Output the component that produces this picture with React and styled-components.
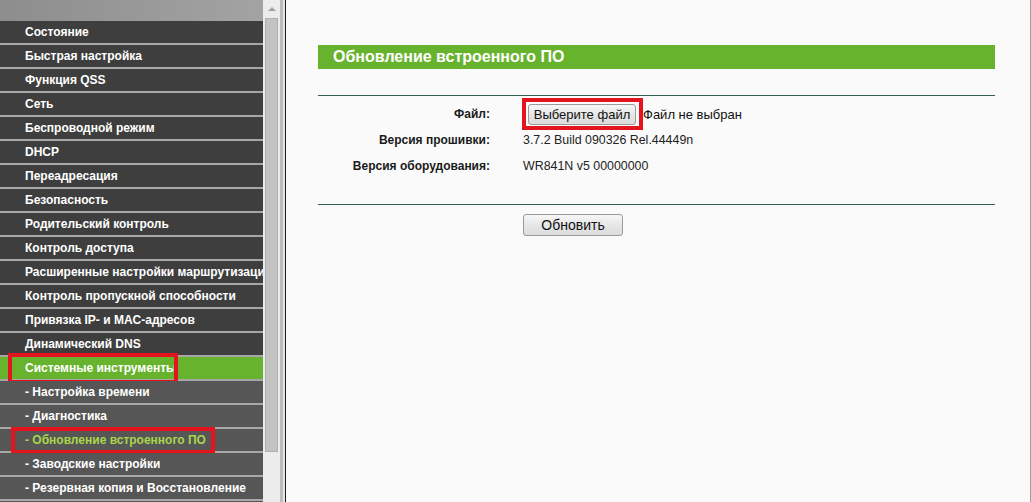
import React from 'react';
import styled, { createGlobalStyle } from 'styled-components';

const GlobalStyle = createGlobalStyle`
  html, body {
    margin: 0;
    padding: 0;
    overflow: hidden;
    background: #fafafa;
    font-family: "Liberation Sans", Arial, sans-serif;
  }
`;

const Page = styled.div`
  display: flex;
  height: 502px;
  width: 1031px;
  overflow: hidden;
`;

const Sidebar = styled.nav`
  width: 263px;
  flex-shrink: 0;
  display: flex;
  flex-direction: column;
  overflow: hidden;
`;

const SidebarHeader = styled.div`
  height: 21px;
  flex-shrink: 0;
  background: linear-gradient(to right, #8d8d8d, #a3a3a3);
`;

const menuBg = {
  main: '#3e3e3e',
  sub: '#565656',
  active: '#67b32e',
};

const MenuItem = styled.div`
  position: relative;
  height: 22px;
  flex-shrink: 0;
  line-height: 22px;
  padding-left: 25px;
  border-bottom: 2px solid #a8a8a8;
  background: ${props => menuBg[props.$kind || 'main']};
  color: ${props => (props.$current ? '#a9d54b' : '#ffffff')};
  font-size: 12px;
  font-weight: bold;
  white-space: nowrap;
`;

const RedFrame = styled.span`
  position: absolute;
  left: ${props => props.$left}px;
  top: ${props => props.$top}px;
  width: ${props => props.$width}px;
  height: ${props => props.$height}px;
  box-sizing: border-box;
  border: 4px solid #e3141e;
  pointer-events: none;
`;

const ScrollTrack = styled.div`
  width: 17px;
  flex-shrink: 0;
  background: #ececec;
  display: flex;
  flex-direction: column;
  align-items: center;
`;

const ScrollArrow = styled.div`
  height: 18px;
  display: flex;
  align-items: center;
  justify-content: center;
  &::before {
    content: '';
    border-left: 4px solid transparent;
    border-right: 4px solid transparent;
    border-bottom: 4px solid #a0a0a0;
  }
`;

const ScrollThumb = styled.div`
  width: 13px;
  height: 434px;
  box-sizing: border-box;
  background: #c3c3c3;
  border: 1px solid #b0b0b0;
`;

const Divider = styled.div`
  width: 6px;
  flex-shrink: 0;
  background: linear-gradient(to right, #bdbdbd 0 3px, #e6e6e6 3px 5px, #1a1a1a 5px 6px);
`;

const Content = styled.main`
  flex: 1;
  background: #fafafa;
  border-right: 1px solid #9d9d9d;
  padding: 45px 0 0 32px;
`;

const Panel = styled.section`
  width: 677px;
`;

const TitleBar = styled.h1`
  margin: 0;
  height: 24px;
  line-height: 24px;
  padding-left: 15px;
  background: #67b32e;
  color: #ffffff;
  font-size: 16px;
  font-weight: bold;
`;

const Rule = styled.hr`
  margin: ${props => props.$top}px 0 0;
  border: none;
  height: 1px;
  background: #2f6148;
`;

const FormGrid = styled.div`
  display: grid;
  grid-template-columns: 172px 1fr;
  column-gap: 33px;
  grid-auto-rows: 26px;
  margin-top: 5px;
  align-items: center;
`;

const Label = styled.div`
  text-align: right;
  font-size: 12px;
  font-weight: bold;
  color: #1a1a1a;
`;

const Value = styled.div`
  font-size: 12.4px;
  color: #222;
  display: flex;
  align-items: center;
`;

const FilePicker = styled.span`
  position: relative;
  display: inline-flex;
  margin-left: 5px;
`;

const Button = styled.button`
  font-family: "Liberation Sans", Arial, sans-serif;
  font-size: ${props => props.$size || 13}px;
  color: #111;
  width: ${props => props.$width}px;
  height: ${props => props.$height}px;
  padding: 0;
  border: 1px solid #9a9a9a;
  border-radius: 3px;
  background: linear-gradient(#f7f7f7, #e6e6e6 50%, #dcdcdc);
  cursor: pointer;
`;

const FileStatus = styled.span`
  font-size: 13px;
  color: #111;
  margin-left: 7px;
`;

const Actions = styled.div`
  padding: 9px 0 0 205px;
`;

const mainItems = [
  'Состояние',
  'Быстрая настройка',
  'Функция QSS',
  'Сеть',
  'Беспроводной режим',
  'DHCP',
  'Переадресация',
  'Безопасность',
  'Родительский контроль',
  'Контроль доступа',
  'Расширенные настройки маршрутизации',
  'Контроль пропускной способности',
  'Привязка IP- и MAC-адресов',
  'Динамический DNS',
];

const subItems = [
  '- Настройка времени',
  '- Диагностика',
  '- Обновление встроенного ПО',
  '- Заводские настройки',
  '- Резервная копия и Восстановление',
];

export default function App() {
  return (
    <>
      <GlobalStyle />
      <Page>
        <Sidebar>
          <SidebarHeader />
          {mainItems.map(item => (
            <MenuItem key={item}>{item}</MenuItem>
          ))}
          <MenuItem $kind="active">
            Системные инструменты
            <RedFrame $left={8} $top={-4} $width={170} $height={31} />
          </MenuItem>
          {subItems.map(item => {
            const current = item === '- Обновление встроенного ПО';
            return (
              <MenuItem key={item} $kind="sub" $current={current}>
                {item}
                {current && <RedFrame $left={11} $top={-2} $width={204} $height={27} />}
              </MenuItem>
            );
          })}
          <MenuItem $kind="sub" />
        </Sidebar>
        <ScrollTrack>
          <ScrollArrow />
          <ScrollThumb />
        </ScrollTrack>
        <Divider />
        <Content>
          <Panel>
            <TitleBar>Обновление встроенного ПО</TitleBar>
            <Rule $top={26} />
            <FormGrid>
              <Label>Файл:</Label>
              <Value>
                <FilePicker>
                  <Button $width={108} $height={21}>Выберите файл</Button>
                  <RedFrame $left={-6} $top={-6} $width={121} $height={32} />
                </FilePicker>
                <FileStatus>Файл не выбран</FileStatus>
              </Value>
              <Label>Версия прошивки:</Label>
              <Value>3.7.2 Build 090326 Rel.44449n</Value>
              <Label>Версия оборудования:</Label>
              <Value>WR841N v5 00000000</Value>
            </FormGrid>
            <Rule $top={25} />
            <Actions>
              <Button $width={100} $height={22} $size={14}>Обновить</Button>
            </Actions>
          </Panel>
        </Content>
      </Page>
    </>
  );
}
